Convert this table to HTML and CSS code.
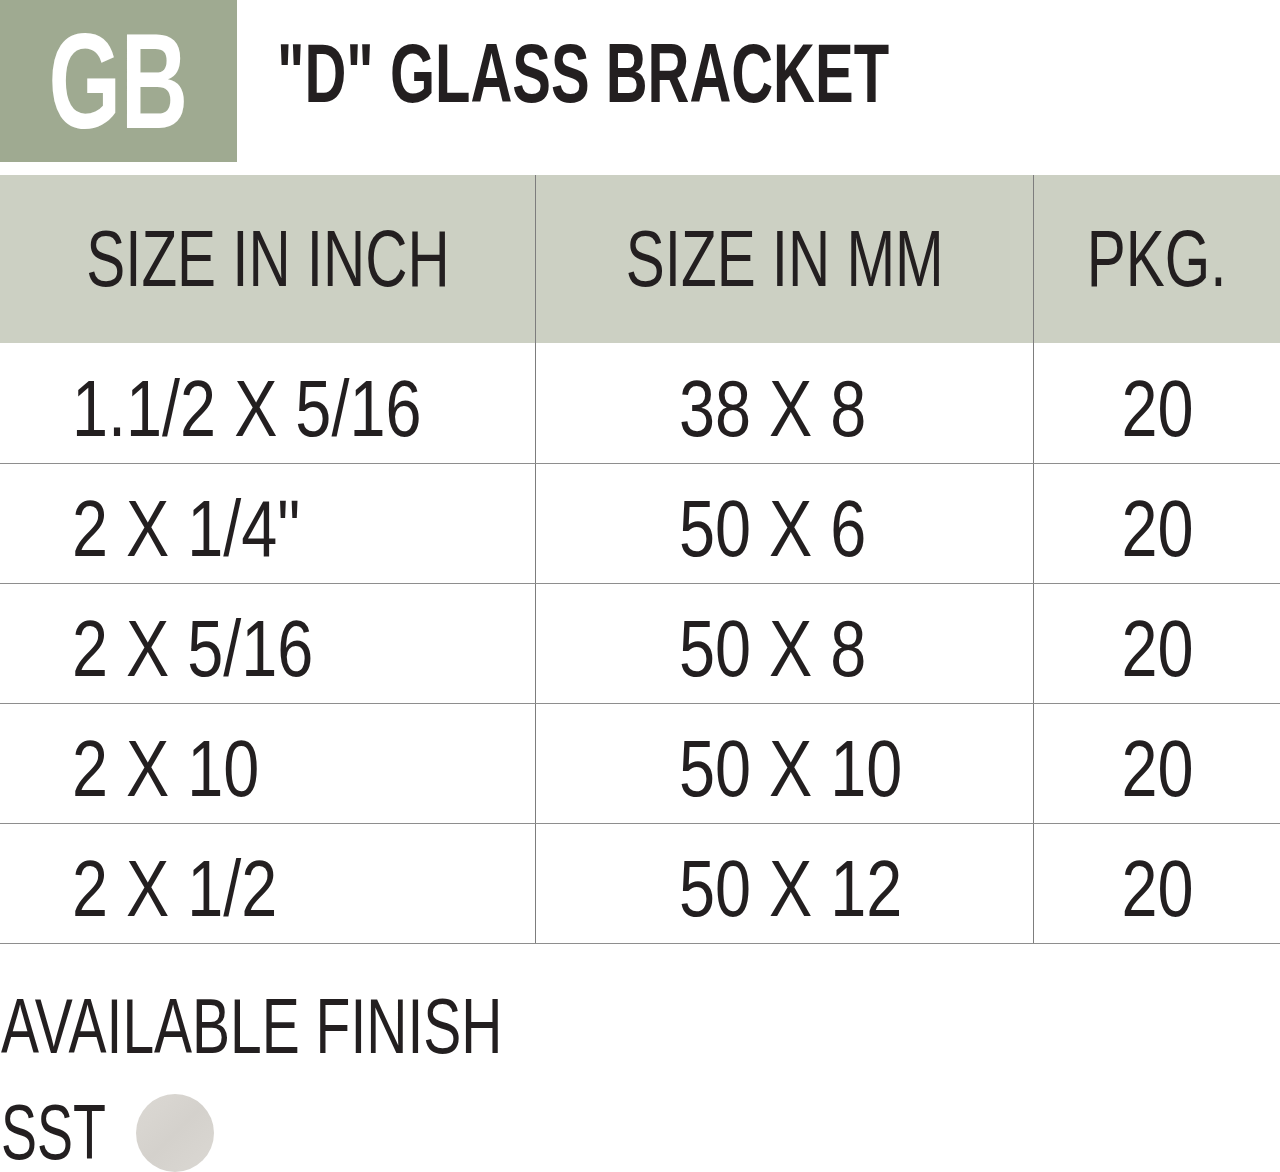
FILE: index.html
```html
<!DOCTYPE html>
<html>
<head>
<meta charset="utf-8">
<link rel="stylesheet" href="styles.css">
</head>
<body>
<div class="page">
  <header class="top">
    <div class="badge"><span class="badge-text">GB</span></div>
    <h1 class="title"><span class="sq">"D" GLASS BRACKET</span></h1>
  </header>
  <table class="spec">
    <thead>
      <tr>
        <th class="c1"><span class="sq">SIZE IN INCH</span></th>
        <th class="c2"><span class="sq">SIZE IN MM</span></th>
        <th class="c3"><span class="sq">PKG.</span></th>
      </tr>
    </thead>
    <tbody>
      <tr><td class="c1"><span class="sq">1.1/2 X 5/16</span></td><td class="c2"><span class="sq">38 X 8</span></td><td class="c3"><span class="sq">20</span></td></tr>
      <tr><td class="c1"><span class="sq">2 X 1/4"</span></td><td class="c2"><span class="sq">50 X 6</span></td><td class="c3"><span class="sq">20</span></td></tr>
      <tr><td class="c1"><span class="sq">2 X 5/16</span></td><td class="c2"><span class="sq">50 X 8</span></td><td class="c3"><span class="sq">20</span></td></tr>
      <tr><td class="c1"><span class="sq">2 X 10</span></td><td class="c2"><span class="sq">50 X 10</span></td><td class="c3"><span class="sq">20</span></td></tr>
      <tr><td class="c1"><span class="sq">2 X 1/2</span></td><td class="c2"><span class="sq">50 X 12</span></td><td class="c3"><span class="sq">20</span></td></tr>
    </tbody>
  </table>
  <section class="finish">
    <div class="finish-title"><span class="sq">AVAILABLE FINISH</span></div>
    <div class="finish-row">
      <span class="sst-box"><span class="sq sst">SST</span></span>
      <span class="swatch"></span>
    </div>
  </section>
</div>
</body>
</html>
```
FILE: styles.css
```css
html, body {
  margin: 0;
  padding: 0;
  background: #ffffff;
}
body {
  font-family: "Liberation Sans", Arial, sans-serif;
  color: #231f20;
}
.page {
  width: 1280px;
}
.sq {
  display: inline-block;
  white-space: nowrap;
  transform-origin: left center;
}
.top {
  display: flex;
  align-items: center;
  height: 162px;
}
.badge {
  width: 237px;
  height: 162px;
  background: #9faa91;
  display: flex;
  align-items: center;
  justify-content: center;
}
.badge-text {
  color: #ffffff;
  font-weight: 700;
  font-size: 135px;
  line-height: 1;
  display: inline-block;
  transform: scaleX(0.69);
  transform-origin: center center;
}
.title {
  margin: 0 0 16px 40px;
  font-size: 84px;
  font-weight: 700;
  line-height: 1;
  white-space: nowrap;
}
.title .sq {
  transform: scaleX(0.69);
}
.spec {
  margin-top: 13px;
  width: 1280px;
  border-collapse: collapse;
  table-layout: fixed;
}
.spec th, .spec td {
  padding: 0;
  font-weight: 400;
  font-size: 80px;
  line-height: 1;
  white-space: nowrap;
  overflow: visible;
}
.spec th {
  height: 168px;
  background: #ccd0c3;
}
.spec th .sq {
  transform: scaleX(0.73);
  transform-origin: center center;
}
.spec td {
  height: 120px;
  box-sizing: border-box;
  padding-top: 12px;
  border-bottom: 1px solid #8e8e8e;
}
.spec td .sq {
  transform: scaleX(0.81);
}
.spec td.c3 .sq {
  transform-origin: center center;
}
.spec .c1 { width: 535px; }
.spec .c2 { width: 497px; border-left: 1px solid #7d7d7d; }
.spec .c3 { border-left: 1px solid #7d7d7d; text-align: center; }
.spec th.c1, .spec th.c2 { text-align: center; }
.spec td.c1 { padding-left: 72px; text-align: left; }
.spec td.c2 { padding-left: 143px; text-align: left; }
.finish {
  padding-top: 44px;
  padding-left: 1px;
}
.finish-title {
  font-size: 77px;
  line-height: 1;
}
.finish-title .sq {
  transform: scaleX(0.74);
}
.finish-row {
  margin-top: 29px;
  display: flex;
  align-items: center;
  font-size: 77px;
  line-height: 1;
}
.sst-box {
  display: block;
  width: 108px;
}
.sst {
  transform: scaleX(0.7);
}
.swatch {
  margin-left: 27px;
  width: 78px;
  height: 78px;
  border-radius: 50%;
  background: linear-gradient(135deg, #dcd9d4 0%, #d4d1cc 50%, #dbd8d3 100%);
}
```
